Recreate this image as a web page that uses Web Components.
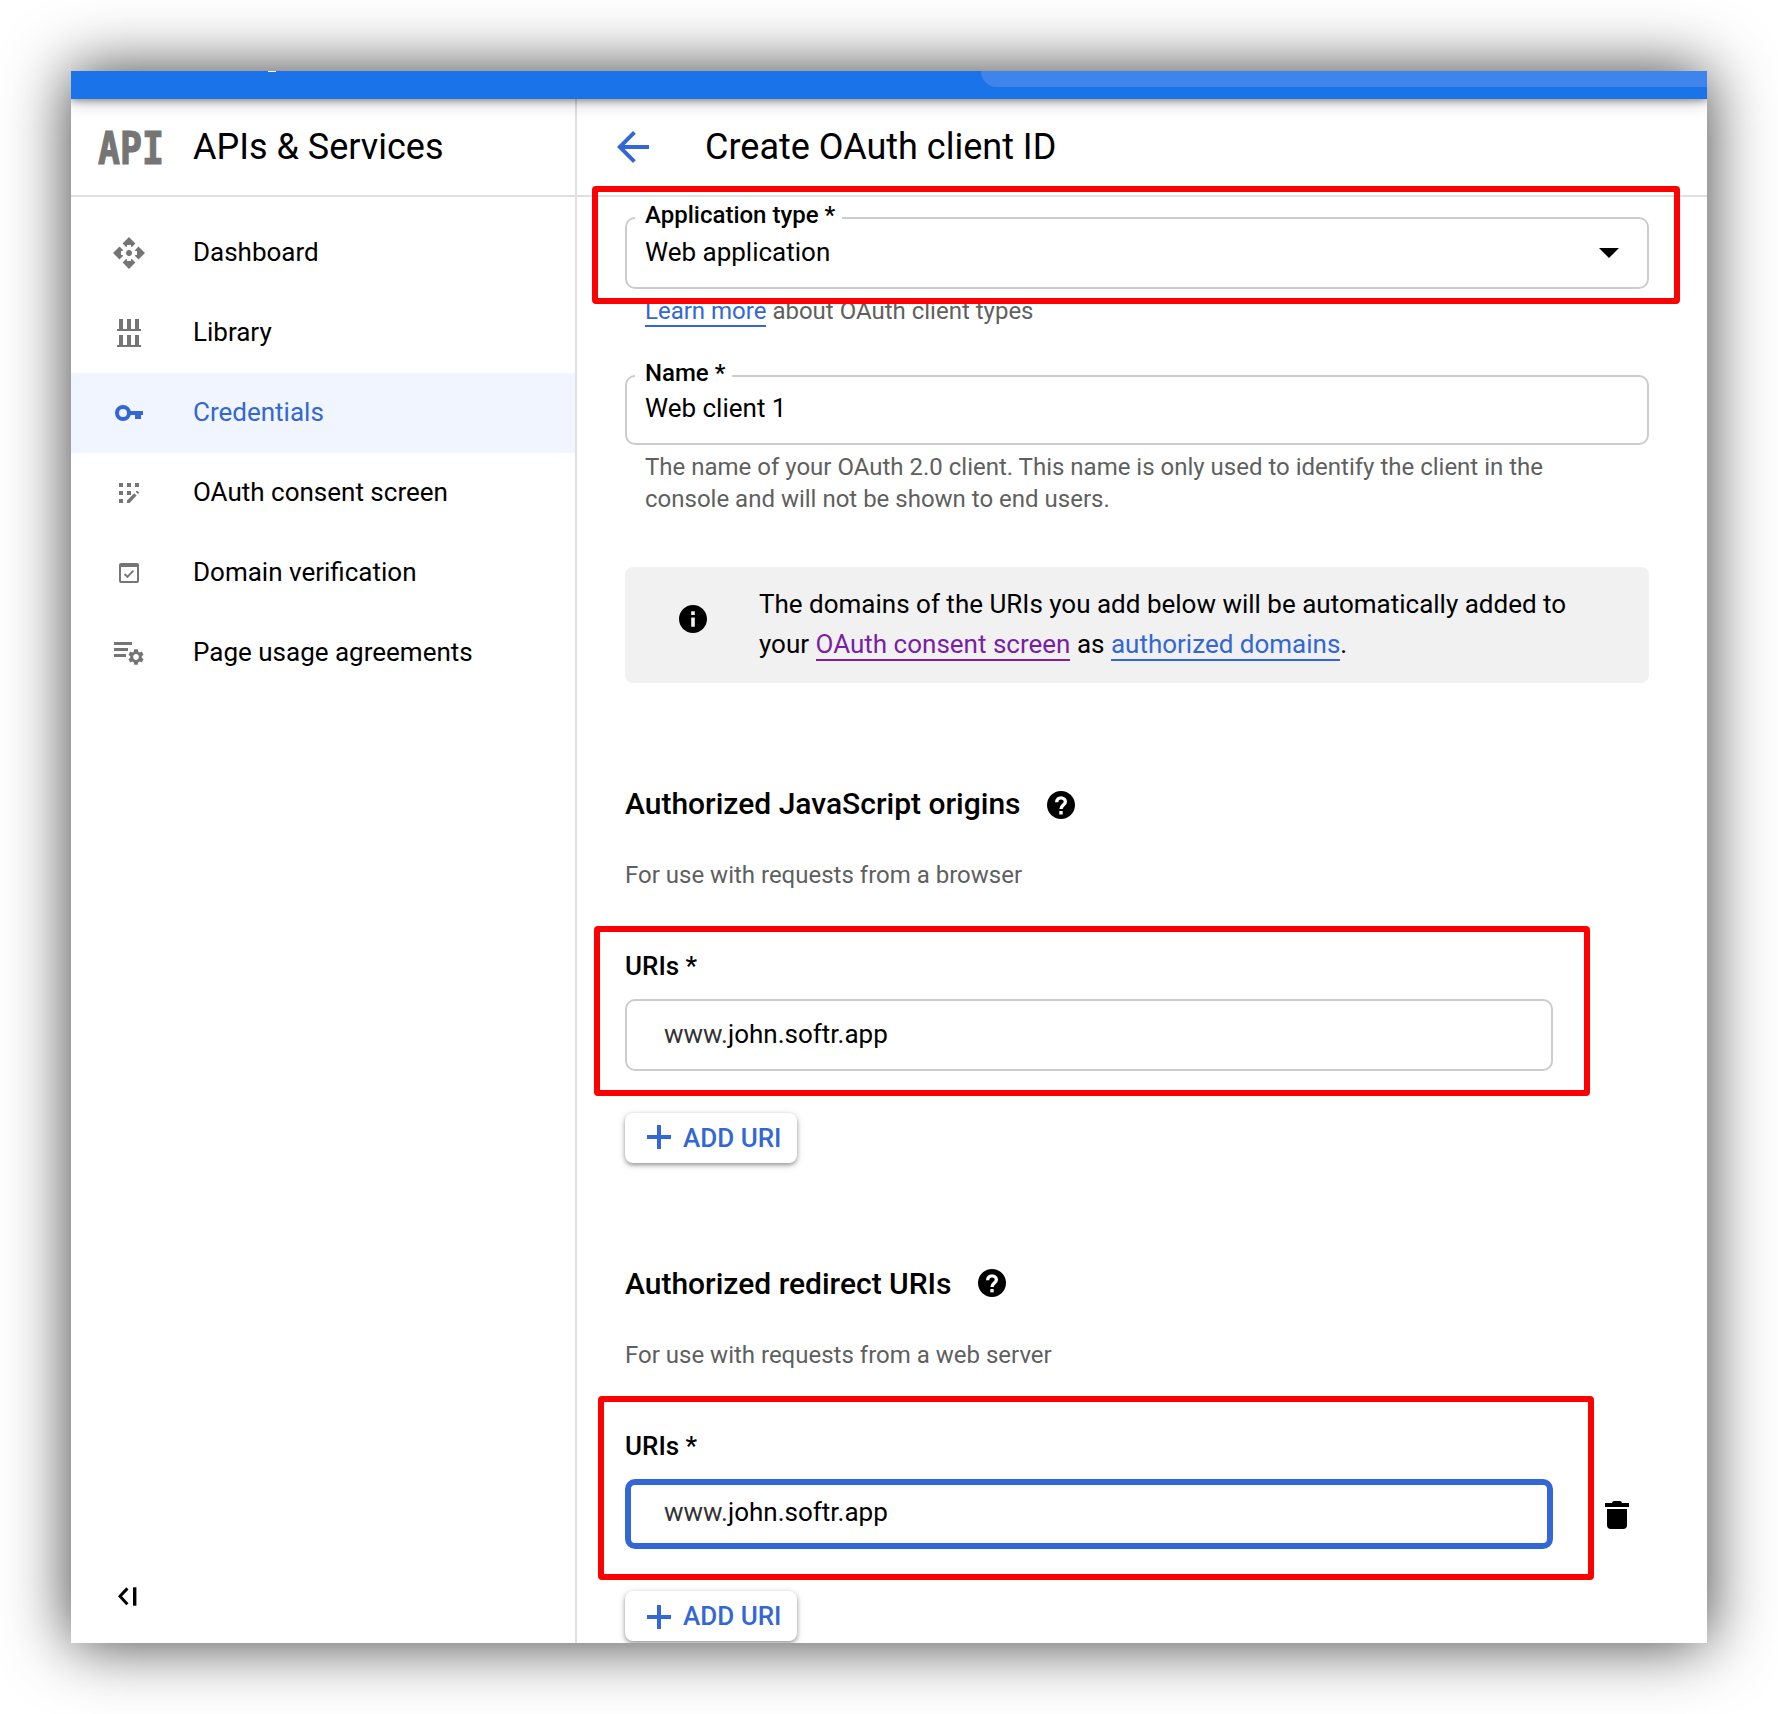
<!DOCTYPE html>
<html lang="en">
<head>
<meta charset="utf-8">
<title>Create OAuth client ID</title>
<style>
	body {
		margin: 0;
		background: #fff;
		color: #000;
		font-family: Roboto, "Liberation Sans", sans-serif;
		font-size: 26px;
		--blue: #3367d6;
		--grey: #757575;
	}
	.link { color: var(--blue); border-bottom: 2px solid currentColor; }
	.visited { color: #7b1fa2; }
	.www { color: #333; }
</style>
</head>
<body>

<console-window>
	<console-bar slot="bar"></console-bar>

	<side-nav slot="nav">
		<nav-item icon="dashboard">Dashboard</nav-item>
		<nav-item icon="library">Library</nav-item>
		<nav-item icon="key" active>Credentials</nav-item>
		<nav-item icon="consent">OAuth consent screen</nav-item>
		<nav-item icon="domain">Domain verification</nav-item>
		<nav-item icon="agreements">Page usage agreements</nav-item>
	</side-nav>

	<page-title>Create OAuth client ID</page-title>

	<form-field label="Application type *" select style="--top: 20px; --height: 72px; --lift: 2px">
		Web application
		<span slot="hint"><span class="link">Learn more</span> about OAuth client types</span>
	</form-field>
	<form-field label="Name *" style="--top: 48px; --height: 70px; --lift: 4px">
		Web client 1
		<span slot="hint">The name of your OAuth 2.0 client. This name is only used to identify the client in the console and will not be shown to end users.</span>
	</form-field>

	<info-note>
		<div>The domains of the URIs you add below will be automatically added to</div>
		<div>your <span class="link visited">OAuth consent screen</span> as <span class="link">authorized domains</span>.</div>
	</info-note>

	<uri-section heading="Authorized JavaScript origins" hint="For use with requests from a browser" style="--help-top: 4px; --plus-top: -2px">
		<span class="www">www.</span>john.softr.app
	</uri-section>
	<uri-section heading="Authorized redirect URIs" hint="For use with requests from a web server" focused style="--plus-top: 2px">
		<span class="www">www.</span>john.softr.app
	</uri-section>

	<mark-box slot="marks" style="left: 521px; top: 115px; width: 1088px; height: 118px"></mark-box>
	<mark-box slot="marks" style="left: 523px; top: 855px; width: 996px; height: 170px"></mark-box>
	<mark-box slot="marks" style="left: 527px; top: 1325px; width: 996px; height: 184px"></mark-box>
</console-window>

<script>
// ================================= //
//              ICONS                //
// ================================= //

const GEAR = 'M19.14 12.94c.04-.3.06-.61.06-.94 0-.32-.02-.64-.07-.94l2.03-1.58c.18-.14.23-.41.12-.61l-1.92-3.32c-.12-.22-.37-.29-.59-.22l-2.39.96c-.5-.38-1.03-.7-1.62-.94l-.36-2.54c-.04-.24-.24-.41-.48-.41h-3.84c-.24 0-.43.17-.47.41l-.36 2.54c-.59.24-1.13.57-1.62.94l-2.39-.96c-.22-.08-.47 0-.59.22L2.74 8.87c-.12.21-.08.47.12.61l2.03 1.58c-.05.3-.09.63-.09.94s.02.64.07.94l-2.03 1.58c-.18.14-.23.41-.12.61l1.92 3.32c.12.22.37.29.59.22l2.39-.96c.5.38 1.03.7 1.62.94l.36 2.54c.05.24.24.41.48.41h3.84c.24 0 .44-.17.47-.41l.36-2.54c.59-.24 1.13-.56 1.62-.94l2.39.96c.22.08.47 0 .59-.22l1.92-3.32c.12-.22.07-.47-.12-.61l-2.01-1.58zM12 15.6c-1.98 0-3.6-1.62-3.6-3.6s1.62-3.6 3.6-3.6 3.6 1.62 3.6 3.6-1.62 3.6-3.6 3.6z';
const ARM = 'M16 0L22.4 6.5 18.7 10.2 18 9.6V8H14V9.6L13.3 10.2 9.6 6.5Z';

// name: [width, height, viewBox, markup]
const ICONS = {
	dashboard: [32, 32, '0 0 32 32', [0, 90, 180, 270].map(a => `<path d="${ARM}" transform="rotate(${a} 16 16)"/>`).join('') + '<path d="M16 12.8L18.2 13.8 19.2 16 18.2 18.2 16 19.2 13.8 18.2 12.8 16 13.8 13.8Z"/>'],
	library: [24, 28, '0 0 24 28', '<path d="M2 0h4v10h4V0h4v10h4V0h4v10h2v2H0v-2h2zM2 16h4v10h4V16h4v10h4V16h4v10h2v2H0v-2h2z"/>'],
	key: [28, 16, '0 0 28 16', '<circle cx="8" cy="8" r="6" fill="none" stroke="currentColor" stroke-width="4"/><path d="M15 6h13v4h-2v4h-6v-4h-5z"/>'],
	consent: [20, 20, '0 0 20 20', '<path d="M0 0h4v4H0zM8 0h4v4H8zM16 0h4v4h-4zM0 8h4v4H0zM8 8h4v4H8zM0 16h4v4H0zM8 20v-2.600l7.200-7.200 2.400 2.400L10.600 20zM16.700 8.700l.8-.8q.5-.4 1 0l1.300 1.300q.4.5 0 1l-.8.8z"/>'],
	domain: [20, 20, '0 0 20 20', '<path fill-rule="evenodd" d="M2 0h16q2 0 2 2v16q0 2-2 2H2q-2 0-2-2V2Q0 0 2 0zM2 4v14h16V4z"/><path d="M5.6 11l2.800 2.800L14.400 7.600" fill="none" stroke="currentColor" stroke-width="1.900"/>'],
	agreements: [30, 23, '0 0 30 23', `<path d="M0 0h18v3H0zM0 6h14v3H0zM0 12h12v3H0z"/><path transform="translate(12.4 5.4) scale(.8)" d="${GEAR}"/>`],
	collapse: [19, 19, '0 0 19 19', '<path d="M9.4 1.4L2 9.3l7.4 7.9" fill="none" stroke="currentColor" stroke-width="3"/><path d="M15 .3h3.4v18.4H15z"/>'],
	back: [32, 32, '4 4 16 16', '<path d="M20 11H7.83l5.59-5.59L12 4l-8 8 8 8 1.41-1.41L7.83 13H20v-2z"/>'],
	arrow: [20, 10, '0 0 20 10', '<path d="M0 0h20L10 10z"/>'],
	info: [28, 28, '2 2 20 20', '<path d="M12 2C6.48 2 2 6.48 2 12s4.48 10 10 10 10-4.48 10-10S17.52 2 12 2zm1.300 15.600h-2.600V11h2.600v6.600zm0-8.400h-2.600V6.500h2.600v2.700z"/>'],
	help: [28, 28, '2 2 20 20', '<path d="M12 2C6.48 2 2 6.48 2 12s4.48 10 10 10 10-4.48 10-10S17.52 2 12 2z"/><path fill="none" stroke="#fff" stroke-width="2.400" d="M8.900 10c0-1.900 1.400-3.100 3.100-3.100s3.100 1.200 3.100 2.800c0 2.300-3.100 2.500-3.100 5.200"/><path fill="#fff" d="M10.800 16.300h2.400v2.400h-2.400z"/>'],
	plus: [24, 24, '0 0 24 24', '<path d="M10 0h4v10h10v4H14v10h-4V14H0v-4h10z"/>'],
	trash: [24, 28, '0 0 24 28', '<path d="M0 2h7q.5-2 2-2h6q1.500 0 2 2h7v4H0zM2 8h20v16q0 4-4 4H6q-4 0-4-4z"/>']
};

class IconGlyph extends HTMLElement {
	connectedCallback() {
		const [width, height, box, markup] = ICONS[this.getAttribute('name')];
		this.attachShadow({mode: 'open'}).innerHTML = `
		<style>
			:host { display: block; flex: none; }
			svg { display: block; }
		</style>
		<svg width="${width}" height="${height}" viewBox="${box}" fill="currentColor">${markup}</svg>
		`;
	}
}

// ================================= //
//              WINDOW               //
// ================================= //

class ConsoleWindow extends HTMLElement {
	connectedCallback() {
		this.attachShadow({mode: 'open'}).innerHTML = `
		<style>
			:host { display: block; box-sizing: border-box; width: 1778px; height: 1714px; padding: 71px; overflow: hidden; }
			.shadow { height: 1572px; box-shadow: 0 0 60px rgba(0, 0, 0, .77); }
			.window { position: relative; display: flex; flex-direction: column; height: 100%; overflow: hidden; background: #fff; }
			.body { flex: 1; display: flex; min-height: 0; }
			main { flex: 1; min-width: 0; }
		</style>
		<div class="shadow">
			<div class="window">
				<slot name="bar"></slot>
				<div class="body">
					<slot name="nav"></slot>
					<main><slot></slot></main>
				</div>
				<slot name="marks"></slot>
			</div>
		</div>
		`;
	}
}

class ConsoleBar extends HTMLElement {
	connectedCallback() {
		this.attachShadow({mode: 'open'}).innerHTML = `
		<style>
			:host { position: relative; z-index: 1; display: flex; flex: none; height: 28px; background: #1a73e8; box-shadow: 0 2px 6px rgba(0, 0, 0, .3), 0 2px 18px rgba(0, 0, 0, .28); }
			.dot { width: 8px; height: 1px; margin-left: 197px; background: #fff; }
			.search { width: 726px; height: 16px; margin-left: auto; background: #3f83ec; border-bottom-left-radius: 15px 16px; }
		</style>
		<div class="dot"></div>
		<div class="search"></div>
		`;
	}
}

// ================================= //
//            NAVIGATION             //
// ================================= //

class SideNav extends HTMLElement {
	connectedCallback() {
		this.attachShadow({mode: 'open'}).innerHTML = `
		<style>
			:host { display: flex; flex-direction: column; flex: none; width: 504px; border-right: 2px solid #e0e0e0; }
			header { display: flex; align-items: center; height: 96px; border-bottom: 2px solid #e0e0e0; font-size: 36px; }
			.logo { width: 66px; margin-left: 27px; padding-top: 3px; font: bold 36.5px/32px "DejaVu Sans Mono", monospace; color: var(--grey); transform: scaleY(1.2); -webkit-text-stroke: 1px var(--grey); }
			.title { margin-left: 29px; }
			nav { padding-top: 16px; }
			icon-glyph { margin: auto 0 37px 47px; }
		</style>
		<header>
			<div class="logo">API</div>
			<div class="title">APIs &amp; Services</div>
		</header>
		<nav><slot></slot></nav>
		<icon-glyph name="collapse"></icon-glyph>
		`;
	}
}

class NavItem extends HTMLElement {
	connectedCallback() {
		this.attachShadow({mode: 'open'}).innerHTML = `
		<style>
			:host { display: flex; align-items: center; height: 80px; }
			:host([active]) { background: #f0f5ff; color: var(--blue); }
			.icon { display: flex; justify-content: center; width: 116px; color: var(--grey); }
			:host([active]) .icon { color: inherit; }
			.text { margin-left: 6px; padding-bottom: 2px; }
		</style>
		<div class="icon"><icon-glyph name="${this.getAttribute('icon')}"></icon-glyph></div>
		<div class="text"><slot></slot></div>
		`;
	}
}

class PageTitle extends HTMLElement {
	connectedCallback() {
		this.attachShadow({mode: 'open'}).innerHTML = `
		<style>
			:host { display: flex; align-items: center; gap: 56px; height: 96px; padding-left: 40px; border-bottom: 2px solid #e0e0e0; font-size: 36px; }
			icon-glyph { color: var(--blue); }
		</style>
		<icon-glyph name="back"></icon-glyph>
		<div><slot></slot></div>
		`;
	}
}

// ================================= //
//               FORM                //
// ================================= //

class FormField extends HTMLElement {
	connectedCallback() {
		this.attachShadow({mode: 'open'}).innerHTML = `
		<style>
			:host { display: block; width: 1024px; margin: var(--top) 0 0 48px; }
			.box { position: relative; display: flex; align-items: center; justify-content: space-between; box-sizing: border-box; height: var(--height); padding: 0 28px 0 18px; border: 2px solid #ccc; border-radius: 10px; }
			.label { position: absolute; left: 8px; top: -20px; padding: 0 7px 0 10px; background: #fff; font-size: 24px; line-height: 32px; font-weight: 500; }
			.value { padding-bottom: var(--lift); }
			.hint { margin: 6px 0 0 20px; width: 920px; font-size: 24px; line-height: 32px; color: #5f5f5f; }
		</style>
		<div class="box">
			<div class="label">${this.getAttribute('label')}</div>
			<div class="value"><slot></slot></div>
			${this.hasAttribute('select') ? '<icon-glyph name="arrow"></icon-glyph>' : ''}
		</div>
		<div class="hint"><slot name="hint"></slot></div>
		`;
	}
}

class InfoNote extends HTMLElement {
	connectedCallback() {
		this.attachShadow({mode: 'open'}).innerHTML = `
		<style>
			:host { display: flex; box-sizing: border-box; width: 1024px; height: 116px; margin: 52px 0 0 48px; padding: 17px 54px; border-radius: 8px; background: #f1f1f1; line-height: 40px; }
			icon-glyph { margin-top: 21px; }
			.text { width: 830px; margin-left: 52px; }
		</style>
		<icon-glyph name="info"></icon-glyph>
		<div class="text"><slot></slot></div>
		`;
	}
}

class UriSection extends HTMLElement {
	connectedCallback() {
		this.attachShadow({mode: 'open'}).innerHTML = `
		<style>
			:host { display: block; margin: 100px 0 0 48px; }
			h2 { display: flex; align-items: center; gap: 26px; height: 40px; margin: 0; font-size: 30px; font-weight: 500; }
			h2 icon-glyph { padding-top: var(--help-top, 0); }
			.hint { margin-top: 36px; font-size: 24px; line-height: 32px; color: #5f5f5f; }
			.label { margin-top: 55px; line-height: 40px; font-weight: 500; }
			.row { display: flex; align-items: center; gap: 52px; margin-top: 13px; }
			.box { display: flex; align-items: center; box-sizing: border-box; width: 928px; height: 72px; padding: 0 37px 2px; border: 2px solid #ccc; border-radius: 10px; }
			:host([focused]) .box { height: 70px; padding: 0 33px 4px; border: 6px solid var(--blue); }
			.row icon-glyph { padding-top: 2px; }
			.button { display: flex; align-items: center; box-sizing: border-box; width: 172px; height: 50px; margin-top: 42px; padding-left: 22px; gap: 12px; border-radius: 8px; color: var(--blue); font-weight: 500; box-shadow: 0 2px 4px rgba(0, 0, 0, .35), 0 2px 10px rgba(0, 0, 0, .12); }
			.button icon-glyph { padding-top: max(0px, var(--plus-top)); padding-bottom: max(0px, calc(0px - var(--plus-top))); }
		</style>
		<h2>${this.getAttribute('heading')}<icon-glyph name="help"></icon-glyph></h2>
		<div class="hint">${this.getAttribute('hint')}</div>
		<div class="label">URIs *</div>
		<div class="row">
			<div class="box"><div><slot></slot></div></div>
			${this.hasAttribute('focused') ? '<icon-glyph name="trash"></icon-glyph>' : ''}
		</div>
		<div class="button"><icon-glyph name="plus"></icon-glyph>ADD URI</div>
		`;
	}
}

// red frame laid over the page
class MarkBox extends HTMLElement {
	connectedCallback() {
		this.attachShadow({mode: 'open'}).innerHTML = `
		<style>
			:host { position: absolute; z-index: 2; box-sizing: border-box; border: 6px solid #f00; border-radius: 4px; }
		</style>
		`;
	}
}

window.customElements.define('icon-glyph', IconGlyph);
window.customElements.define('console-window', ConsoleWindow);
window.customElements.define('console-bar', ConsoleBar);
window.customElements.define('side-nav', SideNav);
window.customElements.define('nav-item', NavItem);
window.customElements.define('page-title', PageTitle);
window.customElements.define('form-field', FormField);
window.customElements.define('info-note', InfoNote);
window.customElements.define('uri-section', UriSection);
window.customElements.define('mark-box', MarkBox);
</script>
</body>
</html>
